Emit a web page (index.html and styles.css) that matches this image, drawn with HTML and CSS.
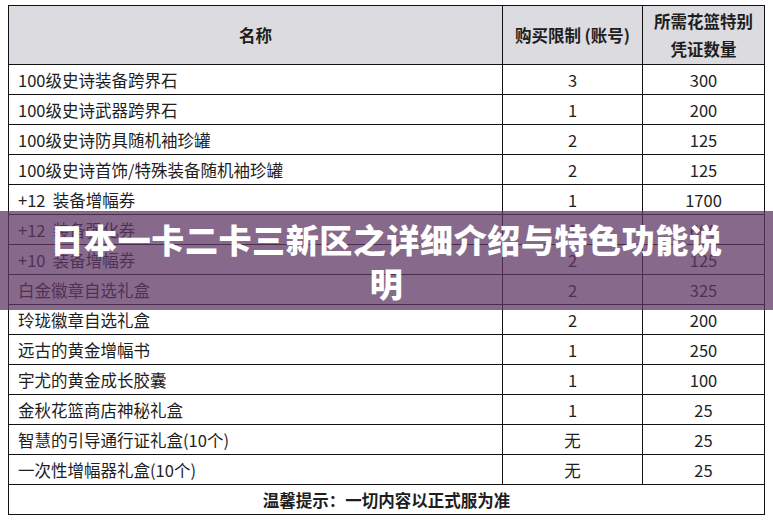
FILE: index.html
```html
<!DOCTYPE html>
<html lang="zh">
<head>
<meta charset="utf-8">
<link rel="stylesheet" href="styles.css">
</head>
<body>
<div class="page">
<table class="grid">
<colgroup><col class="c1"><col class="c2"><col class="c3"></colgroup>
<thead>
<tr><th>名称</th><th>购买限制 (账号)</th><th class="two">所需花篮特别<br>凭证数量</th></tr>
</thead>
<tbody>
<tr><td>100级史诗装备跨界石</td><td>3</td><td>300</td></tr>
<tr><td>100级史诗武器跨界石</td><td>1</td><td>200</td></tr>
<tr><td>100级史诗防具随机袖珍罐</td><td>2</td><td>125</td></tr>
<tr><td>100级史诗首饰/特殊装备随机袖珍罐</td><td>2</td><td>125</td></tr>
<tr><td>+12&nbsp; 装备增幅券</td><td>1</td><td>1700</td></tr>
<tr><td>+12&nbsp; 装备强化券</td><td>1</td><td>600</td></tr>
<tr><td>+10&nbsp; 装备增幅券</td><td>2</td><td>125</td></tr>
<tr><td>白金徽章自选礼盒</td><td>2</td><td>325</td></tr>
<tr><td>玲珑徽章自选礼盒</td><td>2</td><td>200</td></tr>
<tr><td>远古的黄金增幅书</td><td>1</td><td>250</td></tr>
<tr><td>宇尤的黄金成长胶囊</td><td>1</td><td>100</td></tr>
<tr><td>金秋花篮商店神秘礼盒</td><td>1</td><td>25</td></tr>
<tr><td>智慧的引导通行证礼盒(10个)</td><td>无</td><td>25</td></tr>
<tr><td>一次性增幅器礼盒(10个)</td><td>无</td><td>25</td></tr>
<tr class="foot"><td colspan="3">温馨提示：一切内容以正式服为准</td></tr>
</tbody>
</table>
<div class="banner"><h1>日本一卡二卡三新区之详细介绍与特色功能说明</h1></div>
</div>
</body>
</html>
```
FILE: styles.css
```css
html, body {
  margin: 0;
  padding: 0;
  background: #fff;
}
.page {
  position: relative;
  width: 773px;
  height: 526px;
  padding: 5px 9px 0 8px;
  box-sizing: border-box;
  font-family: "Noto Sans CJK SC", "Noto Sans", sans-serif;
  color: #1e1e1e;
}
.grid {
  width: 756px;
  border-collapse: collapse;
  table-layout: fixed;
  font-size: 16.5px;
}
.c1 { width: 494px; }
.c2 { width: 140px; }
.c3 { width: 122px; }
.grid th, .grid td {
  border: 1px solid #111;
  padding: 0;
}
.grid th {
  background: #dcdbdf;
  height: 58px;
  font-weight: bold;
  font-size: 16.5px;
  line-height: 28px;
  text-align: center;
}
.grid td {
  height: 29px;
  line-height: 22px;
  text-align: center;
}
.grid td:first-child {
  text-align: left;
  padding-left: 9px;
}
.grid tr.foot td {
  text-align: center;
  padding-left: 0;
  font-weight: bold;
}
.banner {
  position: absolute;
  left: 0;
  top: 211px;
  width: 773px;
  height: 99px;
  background: rgba(95, 55, 100, 0.75);
  display: flex;
  align-items: center;
  justify-content: center;
}
.banner h1 {
  margin: 0;
  width: 690px;
  text-align: center;
  color: #fff;
  font-size: 33px;
  line-height: 44px;
  font-weight: 900;
  letter-spacing: 0.6px;
}
```
